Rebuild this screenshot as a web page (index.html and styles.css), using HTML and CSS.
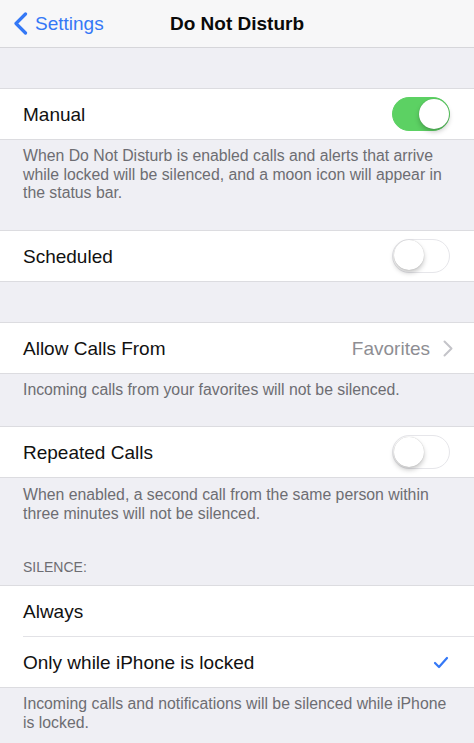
FILE: index.html
```html
<!DOCTYPE html>
<html lang="en">
<head>
    <meta charset="UTF-8">
    <meta name="viewport" content="width=device-width, initial-scale=1.0">
    <title>Do Not Disturb</title>
    <link rel="stylesheet" href="styles.css">
</head>
<body>
    <header class="navbar">
        <a class="back" href="#">
            <svg class="back-icon" width="15" height="23" viewBox="0 0 15 23">
                <polyline points="12.5,2 3,11.5 12.5,21" fill="none" stroke="#3478f6" stroke-width="3.2" stroke-linecap="round" stroke-linejoin="round"/>
            </svg>
            <span>Settings</span>
        </a>
        <h1 class="title">Do Not Disturb</h1>
        <div></div>
    </header>

    <div class="spacer"></div>

    <div class="group">
        <div class="row">
            <span class="label">Manual</span>
            <span class="switch on"><span class="knob"></span></span>
        </div>
    </div>
    <p class="note">When Do Not Disturb is enabled calls and alerts that arrive while locked will be silenced, and a moon icon will appear in the status bar.</p>

    <div class="group">
        <div class="row">
            <span class="label">Scheduled</span>
            <span class="switch"><span class="knob"></span></span>
        </div>
    </div>

    <div class="spacer"></div>

    <div class="group">
        <div class="row">
            <span class="label">Allow Calls From</span>
            <span class="detail">
                Favorites
                <svg class="disclosure" width="10" height="17" viewBox="0 0 10 17">
                    <polyline points="1.5,1.5 8.5,8.5 1.5,15.5" fill="none" stroke="#c4c4c9" stroke-width="2" stroke-linecap="round" stroke-linejoin="round"/>
                </svg>
            </span>
        </div>
    </div>
    <p class="note">Incoming calls from your favorites will not be silenced.</p>

    <div class="group">
        <div class="row">
            <span class="label">Repeated Calls</span>
            <span class="switch"><span class="knob"></span></span>
        </div>
    </div>
    <p class="note tight">When enabled, a second call from the same person within three minutes will not be silenced.</p>

    <h2 class="section-header">SILENCE:</h2>
    <div class="group">
        <div class="row">
            <span class="label">Always</span>
        </div>
        <div class="row">
            <span class="label">Only while iPhone is locked</span>
            <svg class="check" width="16" height="13" viewBox="0 0 16 13">
                <polyline points="2,7 6,11 14,2" fill="none" stroke="#3478f6" stroke-width="2.2" stroke-linecap="round" stroke-linejoin="round"/>
            </svg>
        </div>
    </div>
    <p class="note">Incoming calls and notifications will be silenced while iPhone is locked.</p>
</body>
</html>
```

FILE: styles.css
```css
body {
    margin: 0;
    padding: 0;
    font-family: "Liberation Sans", Arial, sans-serif;
    background-color: #efeff4;
    color: #111;
}

.navbar {
    display: grid;
    grid-template-columns: 1fr auto 1fr;
    align-items: center;
    height: 47px;
    background-color: #f7f7f8;
    border-bottom: 1px solid #d6d6da;
}
.back {
    display: flex;
    align-items: center;
    gap: 7px;
    padding-left: 13px;
    color: #3478f6;
    text-decoration: none;
    font-size: 19px;
}
.back-icon {
    display: block;
}
.title {
    margin: 0;
    font-size: 19px;
    font-weight: bold;
    color: #0a0a0a;
}

.spacer {
    height: 40px;
}

.group {
    background-color: #fff;
    border-top: 1px solid #dcdce0;
    border-bottom: 1px solid #dcdce0;
}
.row {
    display: flex;
    align-items: center;
    justify-content: space-between;
    height: 50px;
    padding: 0 23px;
}
.row + .row {
    border-top: 1px solid #e2e2e6;
    margin-left: 23px;
    padding-left: 0;
}
.label {
    padding-top: 2px;
    font-size: 19px;
}
.detail {
    display: flex;
    align-items: center;
    gap: 13px;
    padding-top: 2px;
    font-size: 19px;
    color: #8e8e93;
    margin-right: -2px;
}
.check {
    display: block;
    margin-right: 2px;
}

.switch {
    position: relative;
    box-sizing: border-box;
    width: 58px;
    height: 34px;
    border-radius: 17px;
    background-color: #fff;
    border: 1.5px solid #e6e6ea;
    margin-right: 1px;
}
.switch .knob {
    position: absolute;
    top: 0.5px;
    left: 0.5px;
    width: 30px;
    height: 30px;
    border-radius: 50%;
    background-color: #fff;
    box-shadow: 0 3px 5px rgba(0, 0, 0, 0.22), 0 0 1px rgba(0, 0, 0, 0.25);
}
.switch.on {
    background-color: #5cd163;
    border-color: #5cd163;
}
.switch.on .knob {
    left: auto;
    right: 0.5px;
}

.note {
    margin: 0;
    padding: 7px 23px 27px;
    font-size: 15.8px;
    line-height: 18.5px;
    color: #6d6d72;
}
.note.tight {
    padding-top: 8px;
    padding-bottom: 0;
}
.section-header {
    margin: 0;
    padding: 35px 23px 9px;
    font-size: 14px;
    font-weight: normal;
    line-height: 18px;
    color: #6d6d72;
}
```
